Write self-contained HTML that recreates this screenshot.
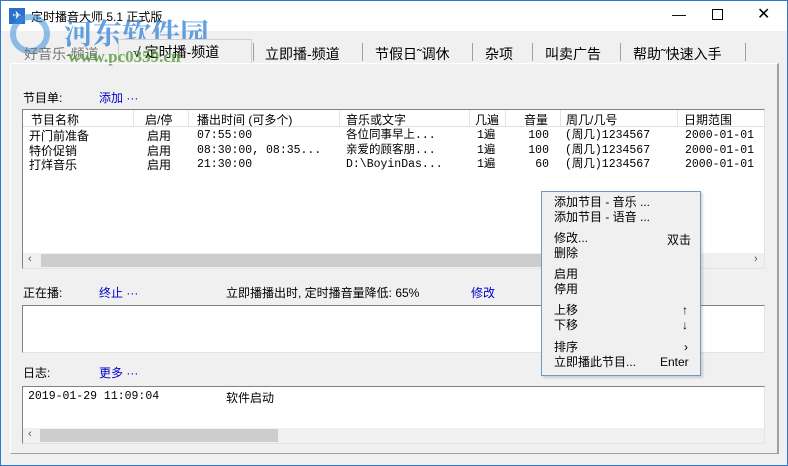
<!DOCTYPE html>
<html><head><meta charset="utf-8"><style>
*{margin:0;padding:0;box-sizing:border-box}
body{width:788px;height:466px;overflow:hidden;background:#f0f0f0;font-family:"Liberation Sans","Noto Sans CJK SC",sans-serif;font-size:12px;color:#000;position:relative}
.a{position:absolute;white-space:nowrap}
.m{font-family:"Liberation Mono","Noto Sans CJK SC",monospace;font-size:11.5px}
.blue{color:#0000c8}
.box{position:absolute;background:#fff;border:1px solid #828282;border-right-color:#e3e3e3;border-bottom-color:#e3e3e3}
.sb{position:absolute;background:#f0f0f0;height:15px}
.th{position:absolute;background:#cdcdcd;height:13px;top:1px}
.vl{position:absolute;width:1px;background:#a0a0a0}
</style></head><body>
<div class="a" style="left:0;top:0;width:788px;height:466px;border:1px solid #2b79d0"></div>
<div class="a" style="left:1px;top:1px;width:786px;height:30px;background:#fff"></div>
<div class="a" style="left:9px;top:8px;width:16px;height:16px;background:#2a6fc9;color:#fff;font-size:11px;line-height:16px;text-align:center">✈</div>
<div class="a" style="left:31px;top:8px;font-size:12px">定时播音大师 5.1 正式版</div>
<div class="a" style="left:672px;top:6px;font-size:14px">—</div>
<div class="a" style="left:712px;top:9px;width:11px;height:11px;border:1px solid #000"></div>
<div class="a" style="left:757px;top:4px;font-size:16px">✕</div>
<!-- watermark -->
<div class="a" style="left:10px;top:14px;width:40px;height:40px;border-radius:50%;border:6px solid rgba(60,140,220,.55)"></div>
<div class="a" style="left:64px;top:12px;font-size:29px;font-weight:bold;color:rgba(50,130,215,.75);font-family:'Noto Serif CJK SC',serif">河东软件园</div>
<!-- tabs -->
<div class="a" style="left:24px;top:44px;font-size:14px;color:#777">好音乐-频道</div>
<div class="a" style="left:118px;top:39px;width:134px;height:25px;background:#f0f0f0;border:1px solid #d0d0d0;border-bottom:none"></div>
<div class="a" style="left:133px;top:42px;font-size:14px">√ 定时播-频道</div>
<div class="a" style="left:68px;top:47px;font-size:17px;font-weight:bold;color:rgba(70,150,40,.75);font-family:'Liberation Serif',serif">www.pc0359.cn</div>
<div class="vl" style="left:253px;top:43px;height:18px"></div>
<div class="a" style="left:265px;top:44px;font-size:14px">立即播-频道</div>
<div class="vl" style="left:362px;top:43px;height:18px"></div>
<div class="a" style="left:375px;top:44px;font-size:14px">节假日˜调休</div>
<div class="vl" style="left:472px;top:43px;height:18px"></div>
<div class="a" style="left:485px;top:44px;font-size:14px">杂项</div>
<div class="vl" style="left:532px;top:43px;height:18px"></div>
<div class="a" style="left:545px;top:44px;font-size:14px">叫卖广告</div>
<div class="vl" style="left:620px;top:43px;height:18px"></div>
<div class="a" style="left:633px;top:44px;font-size:14px">帮助˜快速入手</div>
<div class="vl" style="left:745px;top:43px;height:18px"></div>
<!-- panel -->
<div class="a" style="left:10px;top:63px;width:769px;height:391px;border:1px solid #fff;border-right:2px solid #a0a0a0;border-bottom:1px solid #a0a0a0"></div>
<div class="a" style="left:23px;top:89px">节目单:</div>
<div class="a blue" style="left:99px;top:89px">添加 ···</div>
<!-- list -->
<div class="box" style="left:22px;top:109px;width:743px;height:160px;overflow:hidden">
 <div class="a" style="left:0;top:0;width:741px;height:17px;background:#fff;border-bottom:1px solid #e0e0e0"></div>
 <div class="a" style="left:8px;top:1px">节目名称</div>
 <div class="a" style="left:122px;top:1px">启/停</div>
 <div class="a" style="left:174px;top:1px">播出时间 (可多个)</div>
 <div class="a" style="left:323px;top:1px">音乐或文字</div>
 <div class="a" style="left:452px;top:1px">几遍</div>
 <div class="a" style="left:501px;top:1px">音量</div>
 <div class="a" style="left:543px;top:1px">周几/几号</div>
 <div class="a" style="left:661px;top:1px">日期范围</div>
 <div class="vl" style="left:110px;top:0;height:17px;background:#e3e3e3"></div>
 <div class="vl" style="left:165px;top:0;height:17px;background:#e3e3e3"></div>
 <div class="vl" style="left:316px;top:0;height:17px;background:#e3e3e3"></div>
 <div class="vl" style="left:446px;top:0;height:17px;background:#e3e3e3"></div>
 <div class="vl" style="left:482px;top:0;height:17px;background:#e3e3e3"></div>
 <div class="vl" style="left:537px;top:0;height:17px;background:#e3e3e3"></div>
 <div class="vl" style="left:654px;top:0;height:17px;background:#e3e3e3"></div>
 <div class="a" style="left:6px;top:19px;line-height:14.5px">开门前准备<br>特价促销<br>打烊音乐</div>
 <div class="a" style="left:124px;top:19px;line-height:14.5px">启用<br>启用<br>启用</div>
 <div class="a m" style="left:174px;top:19px;line-height:14.5px">07:55:00<br>08:30:00, 08:35...<br>21:30:00</div>
 <div class="a m" style="left:323px;top:19px;line-height:14.5px">各位同事早上...<br>亲爱的顾客朋...<br>D:\BoyinDas...</div>
 <div class="a m" style="left:454px;top:19px;line-height:14.5px">1遍<br>1遍<br>1遍</div>
 <div class="a m" style="left:504px;top:19px;line-height:14.5px;text-align:right;width:22px">100<br>100<br>60</div>
 <div class="a m" style="left:542px;top:19px;line-height:14.5px">(周几)1234567<br>(周几)1234567<br>(周几)1234567</div>
 <div class="a m" style="left:662px;top:19px;line-height:14.5px">2000-01-01<br>2000-01-01<br>2000-01-01</div>
 <div class="sb" style="left:0;top:143px;width:741px"><div class="th" style="left:18px;width:500px"></div>
 <div class="a" style="left:5px;top:0;font-size:11px;color:#555">‹</div><div class="a" style="left:731px;top:0;font-size:11px;color:#555">›</div></div>
</div>
<!-- now playing -->
<div class="a" style="left:23px;top:284px">正在播:</div>
<div class="a blue" style="left:99px;top:284px">终止 ···</div>
<div class="a" style="left:226px;top:284px">立即播播出时, 定时播音量降低: 65%</div>
<div class="a blue" style="left:471px;top:284px">修改</div>
<div class="box" style="left:22px;top:305px;width:743px;height:48px"></div>
<!-- log -->
<div class="a" style="left:23px;top:364px">日志:</div>
<div class="a blue" style="left:99px;top:364px">更多 ···</div>
<div class="box" style="left:22px;top:386px;width:743px;height:58px">
 <div class="a m" style="left:5px;top:3px">2019-01-29 11:09:04</div>
 <div class="a" style="left:203px;top:2px">软件启动</div>
 <div class="sb" style="left:0;top:41px;width:741px"><div class="th" style="left:17px;width:238px"></div>
 <div class="a" style="left:5px;top:0;font-size:11px;color:#555">‹</div></div>
</div>
<!-- context menu -->
<div class="a" style="left:541px;top:191px;width:160px;height:185px;background:#f0f0f0;border:1px solid #6a9bd0;box-shadow:2px 2px 2px rgba(0,0,0,.15)">
 <div class="a" style="left:12px;top:3px;line-height:15px">添加节目 - 音乐 ...<br>添加节目 - 语音 ...</div>
 <div class="a" style="left:12px;top:39px;line-height:15px">修改...<br>删除</div>
 <div class="a" style="left:125px;top:39px">双击</div>
 <div class="a" style="left:12px;top:75px;line-height:15px">启用<br>停用</div>
 <div class="a" style="left:12px;top:111px;line-height:15px">上移<br>下移</div>
 <div class="a" style="left:140px;top:111px;line-height:15px">↑<br>↓</div>
 <div class="a" style="left:12px;top:148px;line-height:15px">排序<br>立即播此节目...</div>
 <div class="a" style="left:142px;top:148px">›</div>
 <div class="a" style="left:118px;top:163px">Enter</div>
</div>
</body></html>
